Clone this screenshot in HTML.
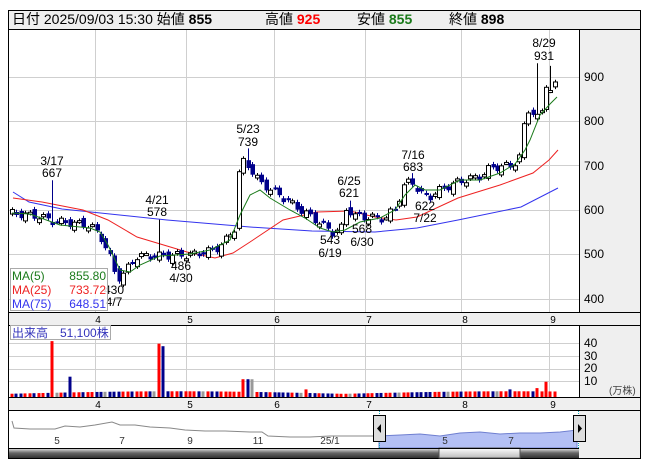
<!DOCTYPE html>
<html><head><meta charset="utf-8"><style>
body{margin:0;background:#fff;width:653px;height:470px;overflow:hidden;font-family:"Liberation Sans","Noto Sans CJK JP",sans-serif}
svg{position:absolute;left:0;top:0}
</style></head><body>
<svg id="s" width="653" height="470" viewBox="0 0 653 470" font-family="Liberation Sans, Noto Sans CJK JP, sans-serif">
<rect x="8.5" y="10.5" width="632" height="448" fill="#fff" stroke="#000"/>
<rect x="9" y="11" width="631" height="18" fill="#efefef"/>
<line x1="8" y1="29.5" x2="641" y2="29.5" stroke="#000"/>
<text y="24" font-size="14" fill="#000"><tspan x="12">日付 2025/09/03 15:30 始値 </tspan><tspan font-weight="bold">855</tspan><tspan x="265">高値 </tspan><tspan fill="#f00" font-weight="bold">925</tspan><tspan x="357">安値 </tspan><tspan fill="#1a7a1a" font-weight="bold">855</tspan><tspan x="449">終値 </tspan><tspan font-weight="bold">898</tspan></text>
<rect x="579" y="30" width="61" height="380" fill="#efefef"/>
<line x1="579.5" y1="30" x2="579.5" y2="410" stroke="#000"/>
<rect x="9" y="312" width="631" height="13" fill="#efefef"/>
<line x1="8" y1="312.5" x2="641" y2="312.5" stroke="#000"/>
<line x1="8" y1="325.5" x2="641" y2="325.5" stroke="#000"/>
<rect x="9" y="397" width="631" height="13" fill="#efefef"/>
<line x1="8" y1="397.5" x2="641" y2="397.5" stroke="#000"/>
<line x1="8" y1="410.5" x2="641" y2="410.5" stroke="#000"/>
<rect x="579" y="411" width="61" height="47" fill="#efefef"/>
<g id="grid" stroke="#cfcfcf" stroke-width="1"></g>
<g font-size="12" fill="#000">
<text x="584" y="81">900</text><text x="584" y="125">800</text><text x="584" y="170">700</text><text x="584" y="214">600</text><text x="584" y="258">500</text><text x="584" y="303">400</text>
<text x="584" y="347">40</text><text x="584" y="360">30</text><text x="584" y="372">20</text><text x="584" y="385">10</text>
<text x="609" y="394" font-size="10" fill="#444">(万株)</text>
</g>
<g font-size="10" fill="#000" text-anchor="middle" id="dates"></g>
<g id="ma" fill="none" stroke-width="1">
<polyline stroke="#3333ee" points="13,192 29,202 62,209 167,220 250,227 312,231 375,232 417,228 458,220 521,207 558,188"/>
<polyline stroke="#ee2222" points="13,198 42,202 83,210 108,220 137,237 187,252 215,258 233,253 250,242 283,220 317,212 350,211 375,217 396,220 417,217 458,198 500,185 533,173 549,160 558,150"/>
</g>
<g id="cand"></g>
<polyline fill="none" stroke="#1a7a1a" stroke-width="1" points="12,213 30,214 60,225 90,228 100,232 108,245 120,270 130,272 140,265 160,256 190,254 210,250 230,240 240,215 250,195 260,190 270,198 290,210 305,218 320,228 333,232 345,230 360,222 380,218 395,210 405,195 415,185 425,190 440,190 460,180 480,180 500,173 515,164 525,150 530,140 540,115 550,104 557,97"/>
<g font-size="12" fill="#000" text-anchor="middle">
<text x="52" y="165">3/17</text><text x="52" y="177">667</text>
<text x="157" y="204">4/21</text><text x="157" y="216">578</text>
<text x="248" y="133">5/23</text><text x="248" y="146">739</text>
<text x="349" y="185">6/25</text><text x="349" y="197">621</text>
<text x="413" y="159">7/16</text><text x="413" y="171">683</text>
<text x="544" y="47">8/29</text><text x="544" y="60">931</text>
<text x="181" y="270">486</text><text x="181" y="282">4/30</text>
<text x="330" y="244">543</text><text x="330" y="257">6/19</text>
<text x="362" y="233">568</text><text x="362" y="246">6/30</text>
<text x="425" y="210">622</text><text x="425" y="222">7/22</text>
<text x="114" y="294">430</text><text x="114" y="306">4/7</text>
</g>
<rect x="10.5" y="268.5" width="97" height="42" fill="#fff" fill-opacity="0.85" stroke="#aaa"/>
<g font-size="12">
<text x="12" y="280" fill="#1a7a1a">MA(5)</text><text x="106" y="280" fill="#1a7a1a" text-anchor="end">855.80</text>
<text x="12" y="294" fill="#ee2222">MA(25)</text><text x="106" y="294" fill="#ee2222" text-anchor="end">733.72</text>
<text x="12" y="308" fill="#3333ee">MA(75)</text><text x="106" y="308" fill="#3333ee" text-anchor="end">648.51</text>
</g>
<g id="vol"></g>
<rect x="10.5" y="325.5" width="100" height="14" fill="#fff" stroke="#aaa"/>
<text x="12" y="337" font-size="12" fill="#3333bb">出来高　51,100株</text>
<path d="M379,436 L400,435 L420,434 L440,436 L460,433 L480,432 L500,434 L520,433 L540,433 L560,432 L577,430 L577,448 L379,448Z" fill="#b4c0f4" stroke="#6f7fd0"/>
<polyline fill="none" stroke="#888" points="12,421 14,428 30,429 55,429 65,426 80,427 95,425 112,422 120,425 135,425 150,427 170,428 185,430 205,431 225,431 250,432 262,432 268,436 290,437 310,437 330,436 379,436"/>
<line x1="379.5" y1="411" x2="379.5" y2="448" stroke="#1ab" stroke-dasharray="1,1"/>
<line x1="578.5" y1="411" x2="578.5" y2="448" stroke="#1ab" stroke-dasharray="1,1"/>
<g font-size="10" fill="#333" text-anchor="middle">
<text x="57" y="444">5</text><text x="122" y="444">7</text><text x="190" y="444">9</text><text x="258" y="444">11</text><text x="330" y="444">25/1</text><text x="445" y="444">5</text><text x="511" y="444">7</text>
</g>
<rect x="373.5" y="415.5" width="12" height="26" fill="#ddd" stroke="#000"/>
<path d="M377,428.5 L381,424 L381,433Z" fill="#000"/>
<rect x="573.5" y="415.5" width="12" height="26" fill="#ddd" stroke="#000"/>
<path d="M582,428.5 L578,424 L578,433Z" fill="#000"/>
<defs><linearGradient id="g" x1="0" y1="0" x2="0" y2="1"><stop offset="0" stop-color="#eee"/><stop offset="0.5" stop-color="#666"/><stop offset="1" stop-color="#333"/></linearGradient>
<linearGradient id="t" x1="0" y1="0" x2="0" y2="1"><stop offset="0" stop-color="#fff"/><stop offset="1" stop-color="#bbb"/></linearGradient></defs>
<rect x="9" y="448" width="570" height="10" fill="url(#g)"/>
<rect x="439" y="448" width="81" height="10" fill="url(#t)" stroke="#555"/>
<line x1="8" y1="448.5" x2="579" y2="448.5" stroke="#000"/>
</svg>
<script>
var NS="http://www.w3.org/2000/svg";
function el(p,t,a){var e=document.createElementNS(NS,t);for(var k in a)e.setAttribute(k,a[k]);p.appendChild(e);return e;}
var grid=document.getElementById('grid');
[95,186,274,365,461,549].forEach(function(x){el(grid,'line',{x1:x+.5,y1:30,x2:x+.5,y2:312});el(grid,'line',{x1:x+.5,y1:326,x2:x+.5,y2:397});});
[77,121,165,210,254,299].forEach(function(y){el(grid,'line',{x1:9,y1:y+.5,x2:579,y2:y+.5});});
[343,356,369,381].forEach(function(y){el(grid,'line',{x1:9,y1:y+.5,x2:579,y2:y+.5});});
var dg=document.getElementById('dates');
[[98,'4'],[190,'5'],[277,'6'],[369,'7'],[465,'8'],[553,'9']].forEach(function(d){var t=el(dg,'text',{x:d[0],y:323});t.textContent=d[1];var t2=el(dg,'text',{x:d[0],y:408});t2.textContent=d[1];});
function Y(p){return 77+(900-p)*0.443;}
var key=[[12,592],[40,585],[50,575],[90,565],[100,540],[108,505],[115,455],[120,445],[128,470],[135,495],[190,498],[215,510],[225,530],[235,560],[240,715],[248,700],[260,660],[275,640],[300,600],[320,570],[333,548],[342,560],[346,605],[355,585],[385,580],[395,605],[405,660],[412,665],[420,635],[430,630],[440,645],[460,665],[480,675],[490,695],[512,700],[520,720],[526,830],[532,820],[540,800],[547,900],[552,855],[557,898]];
function interp(x){for(var i=0;i<key.length-1;i++){if(x<=key[i+1][0]){var a=key[i],b=key[i+1];return a[1]+(b[1]-a[1])*(x-a[0])/(b[0]-a[0]);}}return key[key.length-1][1];}
var c=document.getElementById('cand'),v=document.getElementById('vol');
var prev=592,n=0;
var spikes={52:667,157:578,248:739,349:621,413:683,535:931,550:925};
for(var x=12;x<=558;x+=4.45){n++;
 var cl=interp(x)+9*Math.sin(n*1.7);var op=prev+9*Math.sin(n*2.3+1);
 var hi=Math.max(op,cl)+5,lo=Math.min(op,cl)-5;
 for(var s in spikes){if(Math.abs(x-s)<2.3)hi=spikes[s];}
 var up=cl>=op;var xx=Math.round(x);
 el(c,'line',{x1:xx+.5,y1:Y(hi),x2:xx+.5,y2:Y(lo),stroke:up?'#000':'#00008b'});
 var t=Math.min(Y(op),Y(cl)),h=Math.max(2,Math.abs(Y(op)-Y(cl)));
 if(up)el(c,'rect',{x:xx-1.5,y:t,width:4,height:h,fill:'#fff',stroke:'#000','stroke-width':1});
 else el(c,'rect',{x:xx-1.5,y:t,width:4.5,height:h,fill:'#00008b'});
 var vv=2.5+2*Math.abs(Math.sin(n*3.1));
 var vs={52:44,68:16,157:42,165:40,244:14,248:14,253:14,546:12,535:7,305:6,510:6};
 for(var k in vs){if(Math.abs(x-k)<2.3)vv=vs[k];}
 var col=(n%11==0)?'#999':(up?'#f00':'#00008b');
 if(xx==52||xx==546)col='#f00';
 el(v,'rect',{x:xx-1.5,y:397-vv*1.27,width:3,height:vv*1.27,fill:col});
 prev=cl;}
</script>
</body></html>
